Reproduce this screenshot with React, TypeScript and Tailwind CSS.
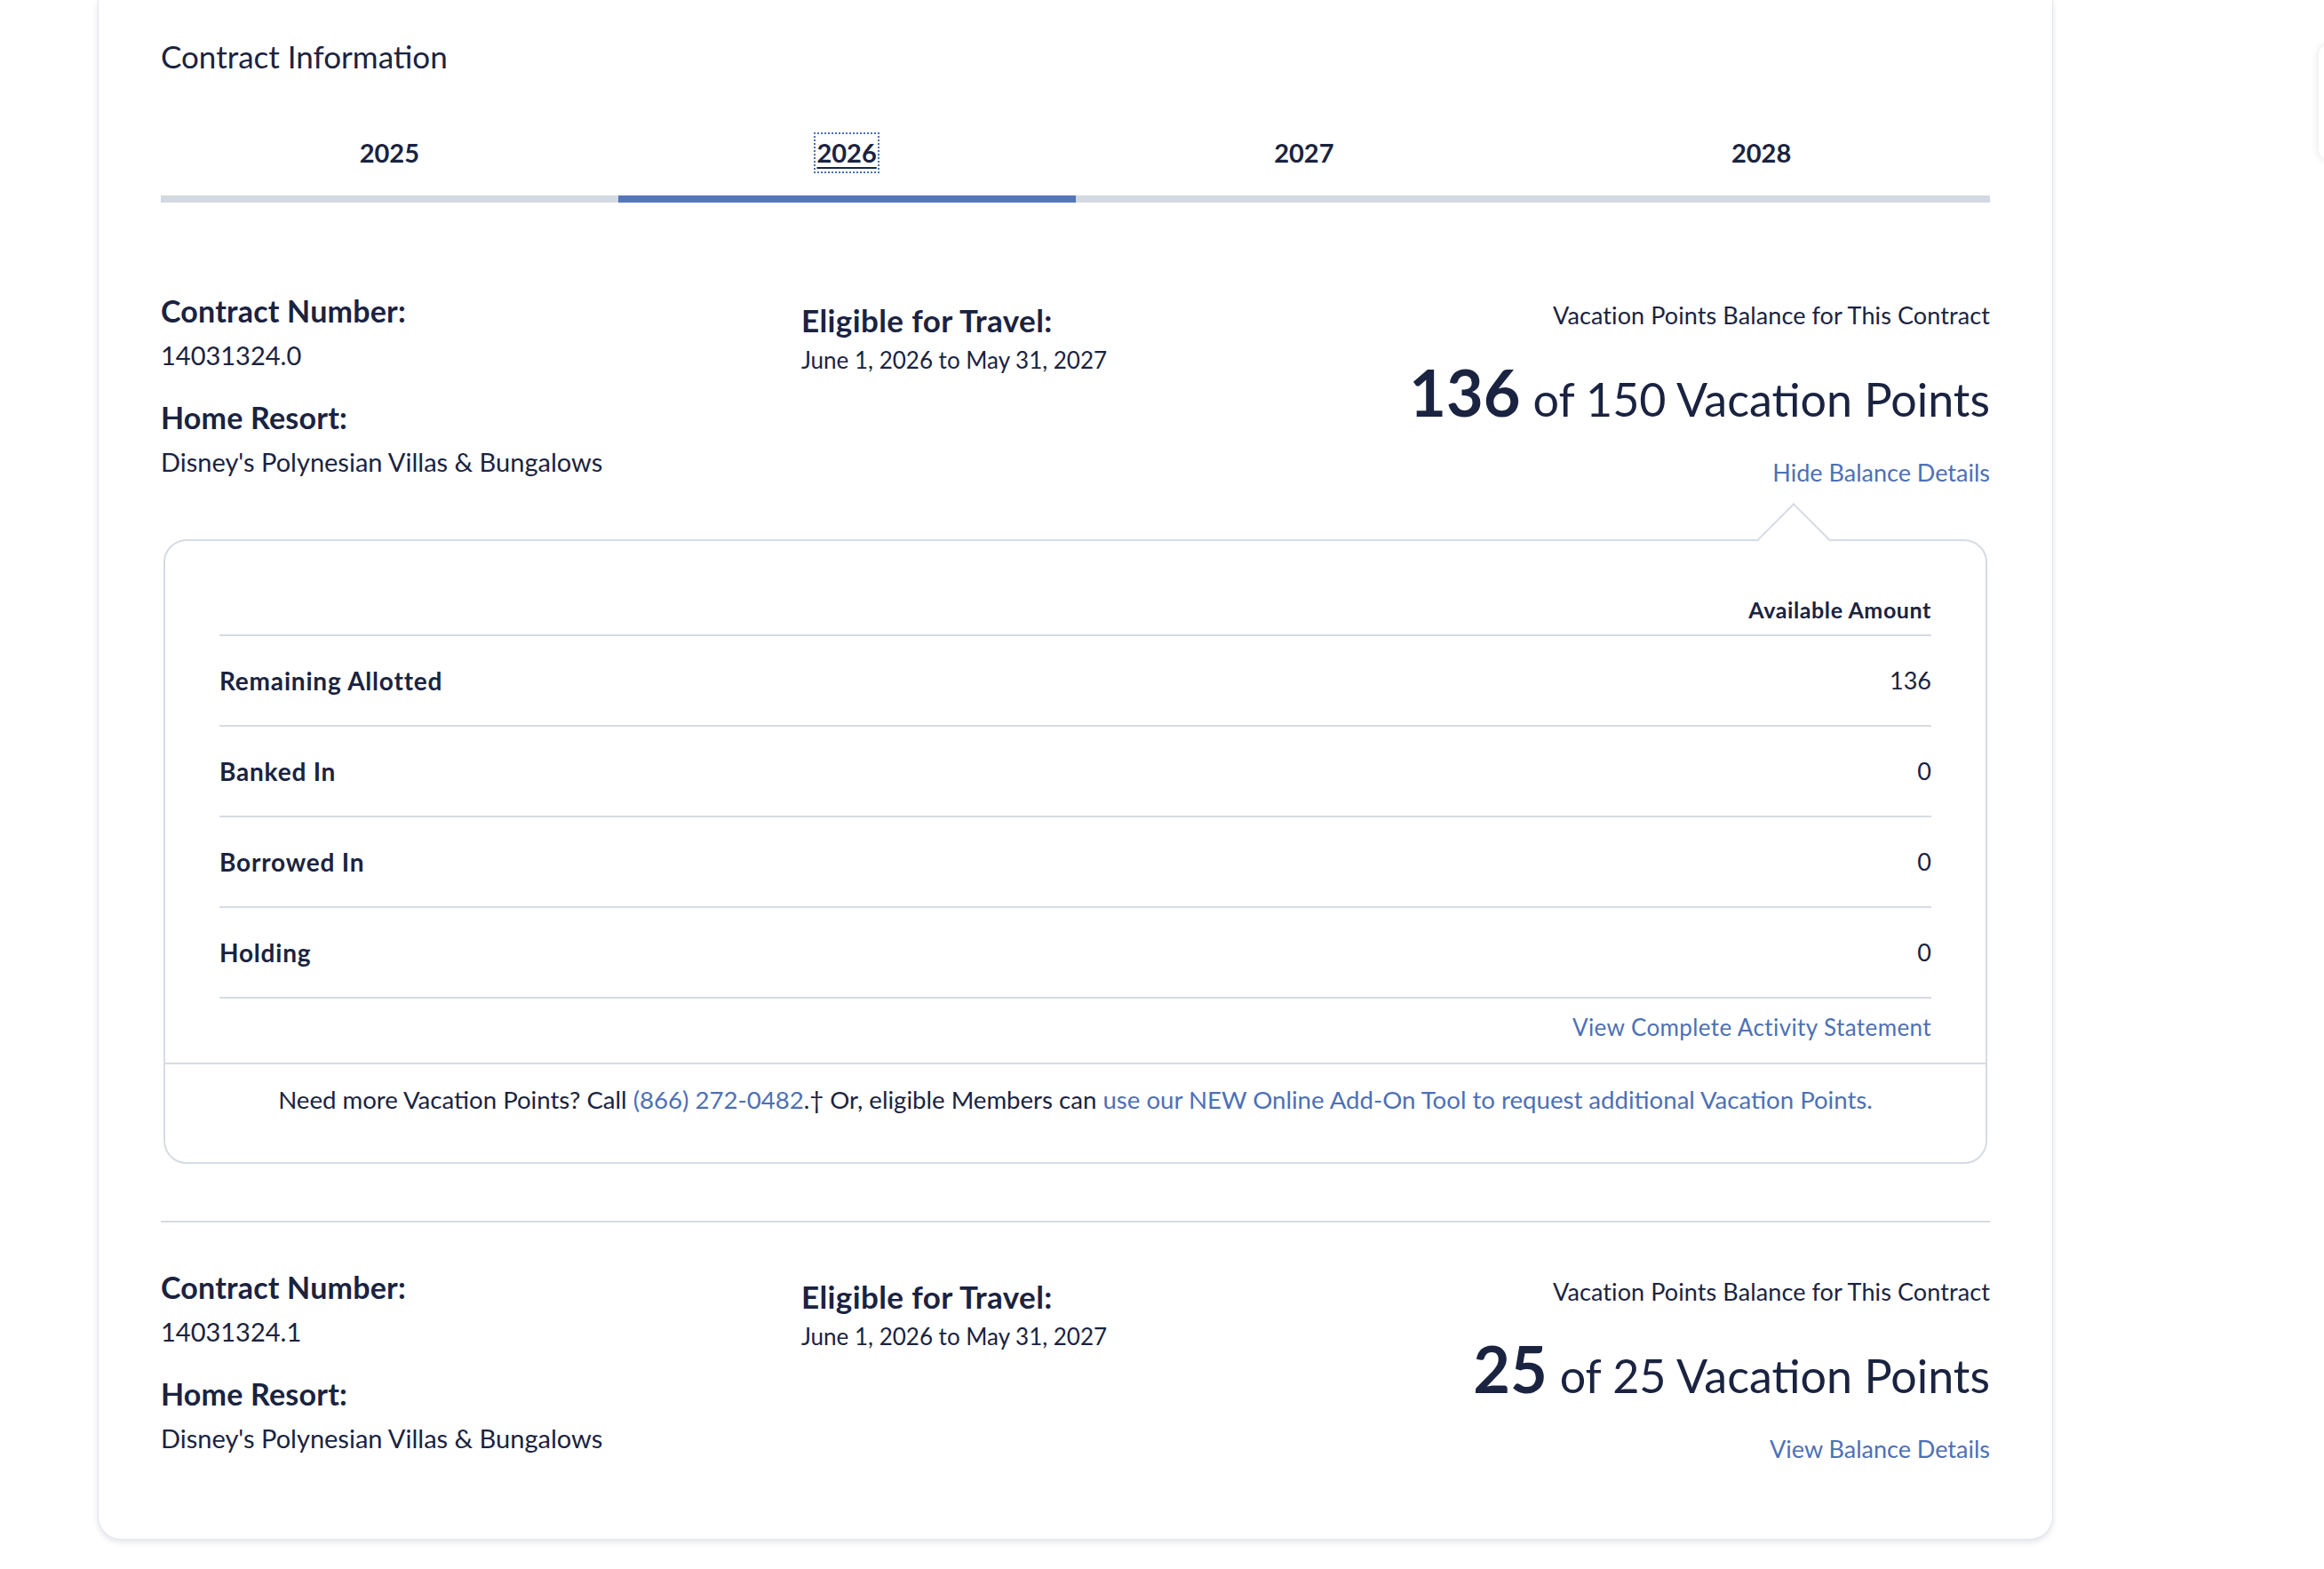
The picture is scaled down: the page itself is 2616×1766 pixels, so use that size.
const ink = 'text-[#1a2340]';

type Contract = {
  number: string;
  resort: string;
  travel: string;
  available: number;
  total: number;
  expanded: boolean;
};

const contracts: Contract[] = [
  {
    number: '14031324.0',
    resort: "Disney's Polynesian Villas & Bungalows",
    travel: 'June 1, 2026 to May 31, 2027',
    available: 136,
    total: 150,
    expanded: true,
  },
  {
    number: '14031324.1',
    resort: "Disney's Polynesian Villas & Bungalows",
    travel: 'June 1, 2026 to May 31, 2027',
    available: 25,
    total: 25,
    expanded: false,
  },
];

const balanceRows = [
  { label: 'Remaining Allotted', value: '136' },
  { label: 'Banked In', value: '0' },
  { label: 'Borrowed In', value: '0' },
  { label: 'Holding', value: '0' },
];

function YearTabs() {
  const years = ['2025', '2026', '2027', '2028'];
  return (
    <div className="mt-[66px] grid grid-cols-4">
      {years.map((y) => {
        const active = y === '2026';
        return (
          <div
            key={y}
            className={
              active
                ? 'flex justify-center border-b-[8px] border-[#5576b9] pb-[28px]'
                : 'flex justify-center border-b-[8px] border-[#d3d9e2] pb-[28px]'
            }
          >
            <span
              className={
                active
                  ? `text-[29px] font-bold leading-[40px] ${ink} underline decoration-2 underline-offset-[5px] outline-dotted outline-2 outline-offset-[1px] outline-[#4a6fb5]`
                  : `text-[29px] font-bold leading-[40px] ${ink}`
              }
            >
              {y}
            </span>
          </div>
        );
      })}
    </div>
  );
}

function BalanceDetails() {
  return (
    <div className="relative mx-[3px] rounded-[26px] border-2 border-[#d6dbe4] bg-white">
      <span className="absolute -top-[31px] right-[187px] h-[58px] w-[58px] rotate-45 border-l-2 border-t-2 border-[#d6dbe4] bg-white" />
      <div className="px-[61px]">
        <div className="flex justify-end border-b-2 border-[#d6dbe4] pb-[13px] pt-[62px]">
          <span className={`text-[25px] font-bold leading-[30px] tracking-[0.6px] ${ink}`}>Available Amount</span>
        </div>
        {balanceRows.map((r) => (
          <div key={r.label} className="flex h-[102px] items-center justify-between border-b-2 border-[#d6dbe4]">
            <span className={`text-[28px] font-bold tracking-[0.8px] ${ink}`}>{r.label}</span>
            <span className={`text-[27px] ${ink}`}>{r.value}</span>
          </div>
        ))}
        <div className="mb-[22px] mt-[14px] flex justify-end">
          <a className="text-[26px] leading-[36px] tracking-[0.4px] text-[#4d70b6]">View Complete Activity Statement</a>
        </div>
      </div>
      <div className="border-t-2 border-[#d6dbe4] pb-[52px] pt-[22px] text-center">
        <p className={`text-[27.6px] leading-[36px] ${ink}`}>
          Need more Vacation Points? Call <a className="text-[#4d70b6]">(866) 272-0482</a>.† Or, eligible Members can{' '}
          <a className="text-[#4d70b6]">use our NEW Online Add-On Tool to request additional Vacation Points.</a>
        </p>
      </div>
    </div>
  );
}

function ContractBlock({ c }: { c: Contract }) {
  return (
    <div className="flex">
      <div className="w-[721px]">
        <div className={`text-[34px] font-bold leading-[40px] tracking-[0.2px] ${ink}`}>Contract Number:</div>
        <div className={`mt-[10px] text-[29px] leading-[40px] ${ink}`}>{c.number}</div>
        <div className={`mt-[30px] text-[34px] font-bold leading-[40px] tracking-[0.2px] ${ink}`}>Home Resort:</div>
        <div className={`mt-[10px] text-[29px] leading-[40px] ${ink}`}>{c.resort}</div>
      </div>
      <div className="flex-1 pt-[10px]">
        <div className={`text-[35px] font-bold leading-[40px] tracking-[0.4px] ${ink}`}>Eligible for Travel:</div>
        <div className={`mt-[7px] text-[26px] leading-[36px] ${ink}`}>{c.travel}</div>
      </div>
      <div className="flex flex-col items-end pt-[7px]">
        <div className={`text-[27px] leading-[36px] tracking-[0.1px] ${ink}`}>Vacation Points Balance for This Contract</div>
        <div className={`mt-[23px] flex items-baseline gap-[14px] leading-[90px] ${ink}`}>
          <span className="text-[72px] font-bold">{c.available}</span>
          <span className="text-[52px]">
            of {c.total} Vacation Points
          </span>
        </div>
        <a className="mt-[20px] text-[27px] leading-[36px] text-[#4d70b6]">
          {c.expanded ? 'Hide Balance Details' : 'View Balance Details'}
        </a>
      </div>
    </div>
  );
}

export default function App() {
  return (
    <div className="relative min-h-screen overflow-hidden bg-white font-['Lato','Liberation_Sans',sans-serif]">
      <div className="absolute right-[-300px] top-[50px] h-[130px] w-[306px] rounded-[12px] bg-white shadow-[0_0_10px_rgba(0,0,0,0.12)]" />
      <div className="ml-[110px] w-[2201px] rounded-b-[26px] border-x border-b border-[#e2e6ec] bg-white px-[70px] pb-[83px] shadow-[0_3px_6px_rgba(30,40,70,0.12)]">
        <h2 className={`pt-[40px] text-[35px] leading-[46px] ${ink}`}>Contract Information</h2>
        <YearTabs />
        <div className="pt-[102px]">
          <ContractBlock c={contracts[0]} />
        </div>
        <div className="mt-[57px]">
          <BalanceDetails />
        </div>
        <div className="mt-[64px] border-t-2 border-[#d6dbe4] pt-[53px]">
          <ContractBlock c={contracts[1]} />
        </div>
      </div>
    </div>
  );
}
